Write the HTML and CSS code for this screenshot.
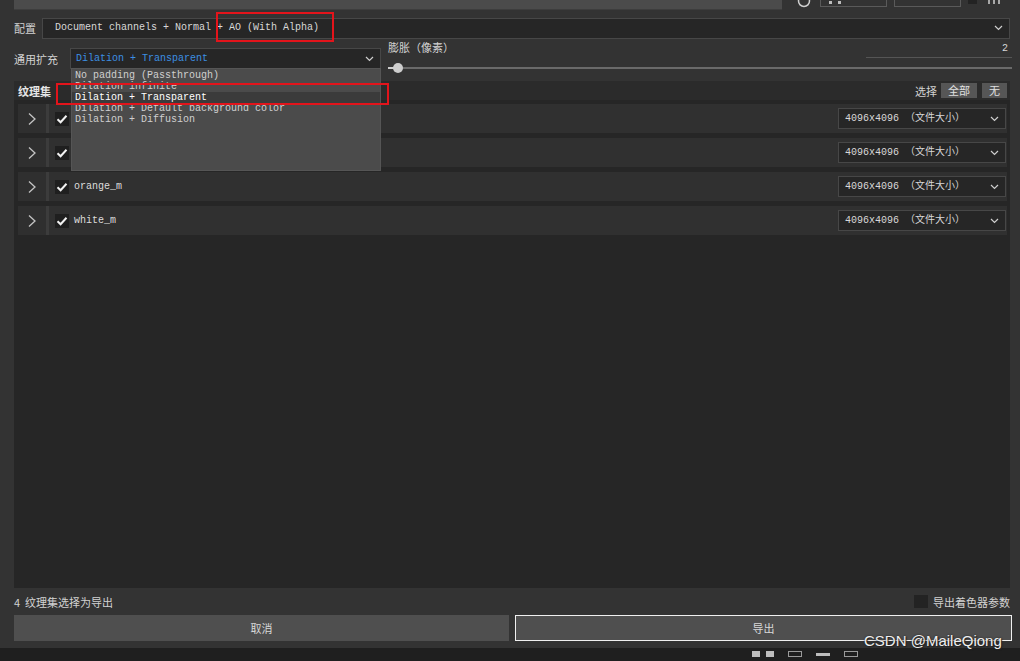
FILE: index.html
```html
<!DOCTYPE html>
<html lang="zh">
<head>
<meta charset="utf-8">
<title>导出纹理</title>
<link rel="stylesheet" href="styles.css">
</head>
<body>
<div class="app">
  <div class="topbar">
    <div class="search"></div>
    <div class="top-tools">
      <svg class="t-circle" width="14" height="10" viewBox="0 0 14 10"><circle cx="7" cy="1" r="5.5" fill="none" stroke="#cfcfcf" stroke-width="1.5"/></svg>
      <div class="tbox"><span class="tdot"></span><span class="tdot"></span></div>
      <div class="tbox"></div>
      <div class="tsq"></div>
      <div class="tbars"><span></span><span></span><span></span></div>
    </div>
  </div>

  <div class="cfg-row">
    <span class="lbl lbl-cfg">配置</span>
    <div class="select cfg-select">
      <span class="sel-text">Document channels + Normal + AO (With Alpha)</span>
      <svg class="chev" width="9" height="6" viewBox="0 0 9 6"><path d="M1 1 L4.5 4.5 L8 1" fill="none" stroke="#cfcfcf" stroke-width="1.2"/></svg>
    </div>
  </div>

  <div class="pad-row">
    <div class="pad-left">
      <span class="lbl lbl-pad">通用扩充</span>
      <div class="select pad-select">
        <span class="sel-text blue">Dilation + Transparent</span>
        <svg class="chev" width="9" height="6" viewBox="0 0 9 6"><path d="M1 1 L4.5 4.5 L8 1" fill="none" stroke="#cfcfcf" stroke-width="1.2"/></svg>
        <ul class="dropdown">
          <li>No padding (Passthrough)</li>
          <li>Dilation infinite</li>
          <li class="on">Dilation + Transparent</li>
          <li>Dilation + Default background color</li>
          <li>Dilation + Diffusion</li>
        </ul>
      </div>
    </div>
    <div class="dilate">
      <div class="dilate-head">
        <span class="lbl">膨胀（像素）</span>
        <span class="val">2</span>
      </div>
      <div class="slider"><div class="fill"></div><div class="thumb"></div></div>
    </div>
  </div>

  <div class="sec-head">
    <span class="sec-title">纹理集</span>
    <div class="sel-group">
      <span class="lbl">选择</span>
      <span class="sbtn sbtn-all">全部</span>
      <span class="sbtn sbtn-none">无</span>
    </div>
  </div>

  <div class="list">
    <div class="row">
      <div class="expander"><svg width="10" height="14" viewBox="0 0 10 14"><path d="M2 1.5 L8 7 L2 12.5" fill="none" stroke="#c4c4c4" stroke-width="1.3"/></svg></div>
      <div class="divider"></div>
      <div class="check"><svg width="14" height="14" viewBox="0 0 14 14"><path d="M2.5 7.2 L5.6 10.2 L11.5 3.8" fill="none" stroke="#f2f2f2" stroke-width="2"/></svg></div>
      <span class="name"></span>
      <div class="select size-select">
        <span class="sel-text">4096x4096 （文件大小）</span>
        <svg class="chev" width="9" height="6" viewBox="0 0 9 6"><path d="M1 1 L4.5 4.5 L8 1" fill="none" stroke="#cfcfcf" stroke-width="1.2"/></svg>
      </div>
    </div>
    <div class="row">
      <div class="expander"><svg width="10" height="14" viewBox="0 0 10 14"><path d="M2 1.5 L8 7 L2 12.5" fill="none" stroke="#c4c4c4" stroke-width="1.3"/></svg></div>
      <div class="divider"></div>
      <div class="check"><svg width="14" height="14" viewBox="0 0 14 14"><path d="M2.5 7.2 L5.6 10.2 L11.5 3.8" fill="none" stroke="#f2f2f2" stroke-width="2"/></svg></div>
      <span class="name"></span>
      <div class="select size-select">
        <span class="sel-text">4096x4096 （文件大小）</span>
        <svg class="chev" width="9" height="6" viewBox="0 0 9 6"><path d="M1 1 L4.5 4.5 L8 1" fill="none" stroke="#cfcfcf" stroke-width="1.2"/></svg>
      </div>
    </div>
    <div class="row">
      <div class="expander"><svg width="10" height="14" viewBox="0 0 10 14"><path d="M2 1.5 L8 7 L2 12.5" fill="none" stroke="#c4c4c4" stroke-width="1.3"/></svg></div>
      <div class="divider"></div>
      <div class="check"><svg width="14" height="14" viewBox="0 0 14 14"><path d="M2.5 7.2 L5.6 10.2 L11.5 3.8" fill="none" stroke="#f2f2f2" stroke-width="2"/></svg></div>
      <span class="name">orange_m</span>
      <div class="select size-select">
        <span class="sel-text">4096x4096 （文件大小）</span>
        <svg class="chev" width="9" height="6" viewBox="0 0 9 6"><path d="M1 1 L4.5 4.5 L8 1" fill="none" stroke="#cfcfcf" stroke-width="1.2"/></svg>
      </div>
    </div>
    <div class="row">
      <div class="expander"><svg width="10" height="14" viewBox="0 0 10 14"><path d="M2 1.5 L8 7 L2 12.5" fill="none" stroke="#c4c4c4" stroke-width="1.3"/></svg></div>
      <div class="divider"></div>
      <div class="check"><svg width="14" height="14" viewBox="0 0 14 14"><path d="M2.5 7.2 L5.6 10.2 L11.5 3.8" fill="none" stroke="#f2f2f2" stroke-width="2"/></svg></div>
      <span class="name">white_m</span>
      <div class="select size-select">
        <span class="sel-text">4096x4096 （文件大小）</span>
        <svg class="chev" width="9" height="6" viewBox="0 0 9 6"><path d="M1 1 L4.5 4.5 L8 1" fill="none" stroke="#cfcfcf" stroke-width="1.2"/></svg>
      </div>
    </div>
  </div>

  <div class="foot-info">
    <span class="lbl">4&nbsp; 纹理集选择为导出</span>
    <label class="shader-opt"><span class="box"></span><span class="lbl">导出着色器参数</span></label>
  </div>

  <div class="buttons">
    <div class="btn">取消</div>
    <div class="btn btn-primary">导出</div>
  </div>

  <div class="bottom-strip">
    <div class="strip-icons">
      <span class="si si-a"></span><span class="si si-a"></span>
      <span class="si si-b"></span><span class="si si-c"></span><span class="si si-b"></span>
    </div>
  </div>

  <div class="mark mark-cfg"></div>
  <div class="mark mark-item"></div>
  <div class="watermark">CSDN @MaileQiong</div>
</div>
</body>
</html>
```

FILE: styles.css
```css
* { box-sizing: border-box; margin: 0; padding: 0; }

html, body {
  width: 1020px;
  height: 661px;
  overflow: hidden;
  background: #333333;
}

body {
  font-family: "Liberation Mono", "Noto Sans CJK SC", monospace;
  font-size: 10px;
  color: #d6d6d6;
}

.app {
  position: relative;
  width: 1020px;
  height: 661px;
  display: flex;
  flex-direction: column;
  background: #333333;
}

.lbl {
  font-family: "Noto Sans CJK SC", "Liberation Sans", sans-serif;
  font-size: 11px;
  color: #d2d2d2;
  line-height: 14px;
  white-space: nowrap;
}

/* top bar */
.topbar {
  height: 10px;
  display: flex;
  align-items: flex-start;
  padding-left: 14px;
}
.search {
  width: 768px;
  height: 10px;
  background: #4b4b4b;
  border-bottom: 1px solid #3d3d3d;
}
.top-tools {
  display: flex;
  align-items: flex-start;
  margin-left: 15px;
  gap: 7px;
}
.t-circle { display: block; margin-right: 2px; }
.tbox {
  width: 67px;
  height: 7px;
  border: 1px solid #5a5a5a;
  border-top: none;
  display: flex;
  gap: 6px;
  padding-left: 8px;
}
.tdot {
  width: 3px;
  height: 3px;
  background: #bdbdbd;
  margin-top: 1px;
}
.tsq {
  width: 9px;
  height: 4px;
  background: #232323;
}
.tbars {
  display: flex;
  gap: 3px;
  margin-left: 4px;
}
.tbars span {
  width: 2px;
  height: 4px;
  background: #a8a8a8;
}

/* selects */
.select {
  position: relative;
  display: flex;
  align-items: center;
  height: 21px;
  background: #262626;
  border: 1px solid #474747;
  padding-left: 12px;
  padding-right: 6px;
}
.sel-text {
  flex: 1;
  white-space: nowrap;
  color: #d8d8d8;
  line-height: 12px;
}
.sel-text.blue { color: #3c8fe2; }
.chev { display: block; flex: none; }

.cfg-row {
  margin-top: 7px;
  height: 22px;
  display: flex;
  align-items: center;
  padding-left: 14px;
  padding-right: 10px;
}
.lbl-cfg { width: 28px; }
.cfg-select { flex: 1; }

/* padding row */
.pad-row {
  height: 42px;
  display: flex;
  padding-left: 14px;
  padding-right: 8px;
}
.pad-left {
  display: flex;
  align-items: center;
  height: 21px;
  margin-top: 9px;
}
.lbl-pad { width: 56px; }
.pad-select {
  width: 311px;
  padding-left: 5px;
}
.dropdown {
  position: absolute;
  left: 0;
  top: 19px;
  width: 310px;
  height: 103px;
  list-style: none;
  background: #4b4b4b;
  border: 1px solid #555555;
  padding-top: 1px;
  z-index: 5;
}
.dropdown li {
  height: 11px;
  line-height: 11px;
  padding-left: 3px;
  color: #cfcfcf;
  white-space: nowrap;
}
.dropdown li.on {
  background: #3b3b3b;
  color: #ffffff;
}

.dilate {
  flex: 1;
  margin-left: 7px;
  display: flex;
  flex-direction: column;
}
.dilate-head {
  height: 19px;
  margin-top: 1px;
  display: flex;
  align-items: flex-start;
  justify-content: space-between;
}
.val {
  width: 146px;
  text-align: right;
  padding-right: 4px;
  border-bottom: 1px solid #555555;
  height: 18px;
  line-height: 18px;
  margin-top: 0;
  color: #d6d6d6;
  font-size: 10px;
}
.slider {
  position: relative;
  height: 2px;
  background: #6a6a6a;
  margin-top: 8px;
}
.fill {
  position: absolute;
  left: 0; top: 0;
  width: 10px; height: 2px;
  background: #cccccc;
}
.thumb {
  position: absolute;
  left: 5px;
  top: -4px;
  width: 10px;
  height: 10px;
  border-radius: 50%;
  background: #cdcdcd;
}

/* section header */
.sec-head {
  height: 19px;
  margin: 0 10px 0 14px;
  background: #2b2b2b;
  display: flex;
  align-items: center;
  justify-content: space-between;
  padding-left: 4px;
  padding-right: 3px;
}
.sec-title {
  font-family: "Noto Sans CJK SC", "Liberation Sans", sans-serif;
  font-weight: bold;
  font-size: 11px;
  color: #e6e6e6;
}
.sel-group {
  display: flex;
  align-items: center;
  gap: 5px;
}
.sel-group .lbl { margin-right: -1px; }
.sbtn {
  font-family: "Noto Sans CJK SC", "Liberation Sans", sans-serif;
  font-size: 11px;
  height: 15px;
  line-height: 15px;
  text-align: center;
  background: #565656;
  color: #e0e0e0;
}
.sbtn-all { width: 36px; }
.sbtn-none { width: 25px; }

/* list */
.list {
  height: 488px;
  margin: 0 10px 0 14px;
  background: #262626;
  padding: 4px 3px 0 4px;
  display: flex;
  flex-direction: column;
  gap: 5px;
}
.row {
  height: 29px;
  background: #303030;
  display: flex;
  align-items: center;
}
.expander {
  width: 28px;
  height: 29px;
  display: flex;
  align-items: center;
  justify-content: center;
  background: #2f2f2f;
}
.divider {
  width: 3px;
  height: 29px;
  background: #3c3c3c;
}
.check {
  width: 14px;
  height: 14px;
  background: #1f1f1f;
  margin-left: 6px;
}
.check svg { display: block; }
.name {
  margin-left: 5px;
  flex: 1;
  color: #dcdcdc;
  line-height: 12px;
}
.size-select {
  width: 168px;
  margin-right: 1px;
  padding-left: 6px;
}

/* footer */
.foot-info {
  height: 27px;
  display: flex;
  align-items: center;
  justify-content: space-between;
  padding-left: 14px;
  padding-right: 10px;
}
.shader-opt {
  display: flex;
  align-items: center;
  gap: 5px;
}
.shader-opt .box {
  width: 14px;
  height: 13px;
  background: #232323;
}

.buttons {
  height: 26px;
  display: flex;
  gap: 6px;
  padding-left: 14px;
  padding-right: 8px;
}
.btn {
  flex: 1;
  background: #4f4f4f;
  color: #d8d8d8;
  font-family: "Noto Sans CJK SC", "Liberation Sans", sans-serif;
  font-size: 11px;
  display: flex;
  align-items: center;
  justify-content: center;
}
.btn-primary {
  border: 1px solid #f0f0f0;
}

.bottom-strip {
  flex: 1;
  margin-top: 7px;
  background: #1f1f1f;
  position: relative;
}
.strip-icons {
  display: flex;
  gap: 6px;
  padding-left: 752px;
  padding-top: 3px;
}
.si { display: block; height: 6px; }
.si-a { width: 8px; background: #bdbdbd; }
.si-b { width: 14px; border: 1px solid #9a9a9a; margin-left: 8px; }
.si-c { width: 14px; height: 3px; background: #bdbdbd; margin-top: 2px; margin-left: 8px; }

/* annotations */
.mark {
  position: absolute;
  border: 2px solid #e3141b;
  z-index: 10;
}
.mark-cfg { left: 216px; top: 12px; width: 118px; height: 30px; }
.mark-item { left: 56px; top: 83px; width: 333px; height: 22px; }

.watermark {
  position: absolute;
  left: 864px;
  top: 632px;
  font-family: "Liberation Sans", sans-serif;
  font-size: 15px;
  line-height: 18px;
  color: #efefef;
  text-shadow: 0 0 2px #222, 1px 1px 1px #222;
  z-index: 10;
}
```
